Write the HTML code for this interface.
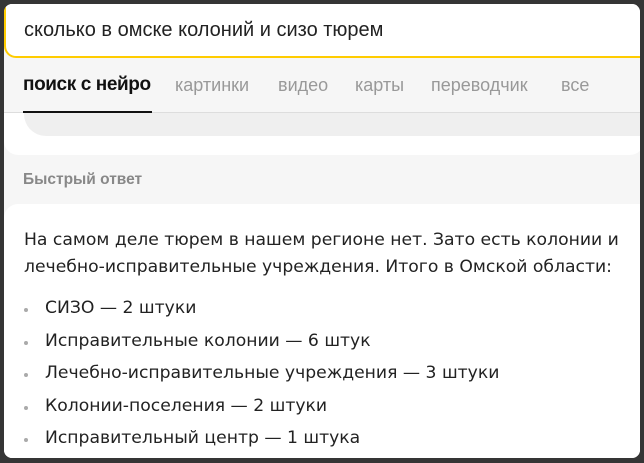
<!DOCTYPE html>
<html><head><meta charset="utf-8"><style>
*{margin:0;padding:0;box-sizing:border-box}
html,body{width:644px;height:463px;overflow:hidden;background:#353535}
.frame{position:absolute;left:4px;top:4px;width:636px;height:454px;background:#f6f6f6;border-radius:8px;overflow:hidden;font-family:"Liberation Sans",sans-serif}
.search{position:absolute;left:0;top:0;width:640px;height:54px;background:#fff;border:2px solid #fc0;border-top:none;border-right:none;border-radius:0 0 0 12px}
.search span{position:absolute;left:18px;top:15px;font-size:20px;color:#222}
.tab{position:absolute;top:71px;font-size:18px;color:#999}
.active{color:#111;font-weight:bold;left:19px;font-size:19px;letter-spacing:-0.4px;top:70px}
.ul{position:absolute;left:19px;top:107px;width:129px;height:2px;background:#111}
.line{position:absolute;left:0;top:108px;width:640px;height:1px;background:#ddd}
.card1{position:absolute;left:0;top:109px;width:640px;height:42px;background:#fff;border-radius:0 0 14px 14px}
.pill{position:absolute;left:20px;top:0;width:620px;height:23px;background:#efefef;border-radius:0 0 0 22px}
.qa{position:absolute;left:19px;top:167px;font-size:15.5px;font-weight:bold;color:#888}
.card2{position:absolute;left:0;top:200px;width:640px;height:260px;background:#fff;border-radius:14px 0 0 0;font-family:"DejaVu Sans",sans-serif;font-size:17.2px;color:#222;white-space:nowrap}
.p{position:absolute;left:20px}
.li{position:absolute;left:41px}
.b{position:absolute;left:20px;width:4px;height:4px;border-radius:2px;background:#aaa}
</style></head><body>
<div class="frame">
<div class="search"><span>сколько в омске колоний и сизо тюрем</span></div>
<div class="tab active">поиск с нейро</div>
<div class="tab" style="left:171px">картинки</div>
<div class="tab" style="left:274px">видео</div>
<div class="tab" style="left:351px">карты</div>
<div class="tab" style="left:427px">переводчик</div>
<div class="tab" style="left:557px">все</div>
<div class="card1"><div class="pill"></div></div>
<div class="line"></div>
<div class="ul"></div>
<div class="qa">Быстрый ответ</div>
<div class="card2">
<div class="p" style="top:26px">На самом деле тюрем в нашем регионе нет. Зато есть колонии и</div>
<div class="p" style="top:53px">лечебно-исправительные учреждения. Итого в Омской области:</div>
<div class="b" style="top:104px"></div><div class="li" style="top:94px">СИЗО — 2 штуки</div>
<div class="b" style="top:137px"></div><div class="li" style="top:127px">Исправительные колонии — 6 штук</div>
<div class="b" style="top:169px"></div><div class="li" style="top:159px">Лечебно-исправительные учреждения — 3 штуки</div>
<div class="b" style="top:202px"></div><div class="li" style="top:192px">Колонии-поселения — 2 штуки</div>
<div class="b" style="top:234px"></div><div class="li" style="top:224px">Исправительный центр — 1 штука</div>
</div>
</div>
</body></html>
